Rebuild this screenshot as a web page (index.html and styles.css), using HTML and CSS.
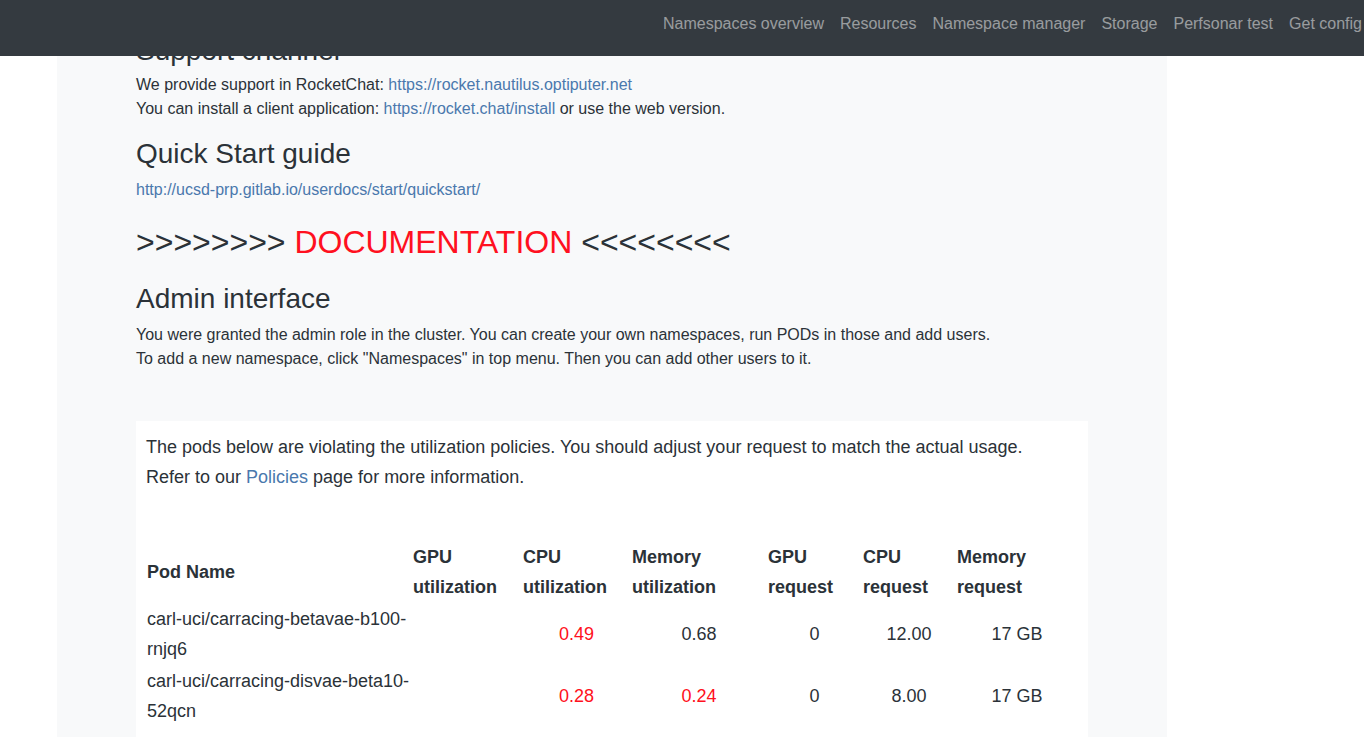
FILE: index.html
```html
<!DOCTYPE html>
<html lang="en">
<head>
<meta charset="utf-8">
<title>Nautilus portal</title>
<link rel="stylesheet" href="styles.css">
</head>
<body>
<nav class="navbar">
  <ul class="nav-links">
    <li><a href="#">Namespaces overview</a></li>
    <li><a href="#">Resources</a></li>
    <li><a href="#">Namespace manager</a></li>
    <li><a href="#">Storage</a></li>
    <li><a href="#">Perfsonar test</a></li>
    <li><a href="#">Get config</a></li>
  </ul>
</nav>
<main class="page">
  <h3 class="section-title first">Support channel</h3>
  <p class="text">We provide support in RocketChat: <a href="#">https://rocket.nautilus.optiputer.net</a><br>
  You can install a client application: <a href="#">https://rocket.chat/install</a> or use the web version.</p>

  <h3 class="section-title">Quick Start guide</h3>
  <p class="text"><a href="#">http://ucsd-prp.gitlab.io/userdocs/start/quickstart/</a></p>

  <h2 class="doc-title">&gt;&gt;&gt;&gt;&gt;&gt;&gt;&gt; <span class="red">DOCUMENTATION</span> &lt;&lt;&lt;&lt;&lt;&lt;&lt;&lt;</h2>

  <h3 class="section-title admin">Admin interface</h3>
  <p class="text">You were granted the admin role in the cluster. You can create your own namespaces, run PODs in those and add users.<br>
  To add a new namespace, click "Namespaces" in top menu. Then you can add other users to it.</p>

  <section class="violations">
    <p class="violations-text">The pods below are violating the utilization policies. You should adjust your request to match the actual usage.<br>
    Refer to our <a href="#">Policies</a> page for more information.</p>
    <table class="pods">
      <colgroup>
        <col class="c-name"><col class="c-gpu-u"><col class="c-cpu-u"><col class="c-mem-u"><col class="c-gpu-r"><col class="c-cpu-r"><col class="c-mem-r">
      </colgroup>
      <thead>
        <tr>
          <th>Pod Name</th>
          <th>GPU utilization</th>
          <th>CPU utilization</th>
          <th>Memory utilization</th>
          <th>GPU request</th>
          <th>CPU request</th>
          <th>Memory request</th>
        </tr>
      </thead>
      <tbody>
        <tr>
          <td class="name">carl-uci/carracing-betavae-b100-rnjq6</td>
          <td></td>
          <td class="red">0.49</td>
          <td>0.68</td>
          <td>0</td>
          <td>12.00</td>
          <td>17 GB</td>
        </tr>
        <tr>
          <td class="name">carl-uci/carracing-disvae-beta10-52qcn</td>
          <td></td>
          <td class="red">0.28</td>
          <td class="red">0.24</td>
          <td>0</td>
          <td>8.00</td>
          <td>17 GB</td>
        </tr>
      </tbody>
    </table>
  </section>
</main>
</body>
</html>
```
FILE: styles.css
```css
html, body {
  margin: 0;
  padding: 0;
}
body {
  background: #ffffff;
  font-family: "Liberation Sans", Arial, sans-serif;
  font-size: 16px;
  line-height: 1.5;
  color: #2b3238;
  height: 737px;
  overflow: hidden;
}
a {
  color: #4a78ad;
  text-decoration: none;
}
.navbar {
  position: fixed;
  top: 0;
  left: 0;
  right: 0;
  height: 56px;
  background: #343a40;
  overflow: hidden;
  z-index: 10;
}
.nav-links {
  list-style: none;
  margin: 0 -6px 0 0;
  padding: 12px 0 0 0;
  display: flex;
  justify-content: flex-end;
  white-space: nowrap;
}
.nav-links a {
  display: block;
  padding: 0 8px;
  line-height: 24px;
  color: rgba(255, 255, 255, 0.5);
}
.page {
  margin-left: 57px;
  width: 952px;
  padding: 1px 79px 20px;
  background: #f8f9fa;
  min-height: 736px;
}
.section-title {
  font-size: 28px;
  font-weight: 500;
  line-height: 1.2;
  margin: 0 0 8px;
  color: #2b3238;
}
.section-title.first {
  margin-top: 33px;
  margin-bottom: 5px;
}
.section-title.admin {
  margin-top: 20px;
  margin-bottom: 8px;
}
.text {
  margin: 0 0 16px;
  font-size: 16px;
  line-height: 24px;
}
.doc-title {
  font-size: 32px;
  font-weight: 500;
  line-height: 1.2;
  margin: 21px 0 8px;
  color: #2b3238;
}
.red {
  color: #ff1020;
}
.violations {
  margin-top: 50px;
  background: #ffffff;
  padding: 11px 10px 20px;
}
.violations-text {
  margin: 0 0 49px;
  font-size: 18px;
  line-height: 30px;
}
.pods {
  width: 932px;
  table-layout: fixed;
  border-collapse: collapse;
  font-size: 18px;
  line-height: 30px;
}
.c-name { width: 266px; }
.c-gpu-u { width: 110px; }
.c-cpu-u { width: 109px; }
.c-mem-u { width: 136px; }
.c-gpu-r { width: 95px; }
.c-cpu-r { width: 94px; }
.c-mem-r { width: 122px; }
.pods th {
  text-align: left;
  font-weight: 700;
  vertical-align: middle;
  padding: 1px;
}
.pods td {
  text-align: center;
  vertical-align: middle;
  padding: 1px 0;
}
.pods td.name {
  text-align: left;
  padding-left: 1px;
}
```
